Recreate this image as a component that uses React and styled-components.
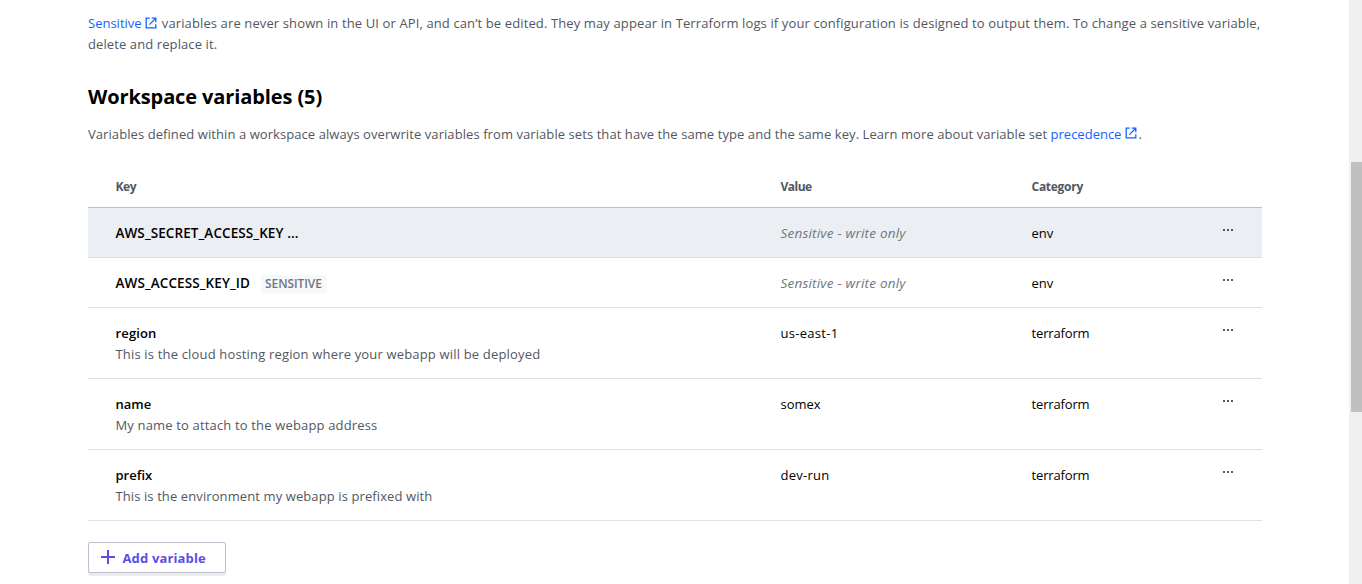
import React from "react";
import styled, { createGlobalStyle } from "styled-components";

const GlobalStyle = createGlobalStyle`
  * { box-sizing: border-box; }
  html, body { margin: 0; height: 584px; overflow: hidden; background: #fff; }
  body { font: 400 13px/21px "Open Sans", "Noto Sans", sans-serif; color: #000; }
`;

const Viewport = styled.div`
  display: flex;
  width: 1362px;
  height: 584px;
  overflow: hidden;
`;

const Main = styled.main`
  width: 1174px;
  margin-left: 88px;
  padding-top: 13px;
  white-space: nowrap;
`;

const ScrollTrack = styled.div`
  width: 13px;
  height: 584px;
  margin-left: auto;
  padding: 162px 0 0 2px;
  background: #f0f0f0;
`;

const ScrollThumb = styled.div`
  height: 250px;
  background: #c0c0c0;
`;

const Paragraph = styled.p`
  margin: 0;
  color: #525761;
  letter-spacing: ${(p) => p.$spacing || 0}px;
`;

const Link = styled.a`
  color: #1563ff;
  letter-spacing: ${(p) => p.$spacing || 0}px;
`;

const Title = styled.h2`
  margin: 28px 0 0;
  font-size: 20px;
  line-height: 28px;
  font-weight: 700;
  letter-spacing: -0.11px;
`;

const Intro = styled(Paragraph)`
  margin-top: 13px;
`;

const ExternalSvg = styled.svg`
  width: 12px;
  height: 12px;
  margin: 0 ${(p) => p.$after}px 0 ${(p) => p.$before}px;
  vertical-align: ${(p) => p.$lift}px;
`;

const Row = styled.div`
  display: grid;
  grid-template-columns: 665px 251px 190px 1fr;
  height: ${(p) => (p.$tall ? 71 : 50)}px;
  padding: 15px 0 0 27.5px;
  border-bottom: 1px solid #dce0e6;
  background: ${(p) => (p.$active ? "#ebeef2" : "transparent")};
`;

const HeaderRow = styled(Row)`
  height: 63px;
  padding-top: 31px;
  border-bottom-color: #bac1cc;
  color: #525761;
  font-size: 12px;
  font-weight: 700;
`;

const Cell = styled.div`
  letter-spacing: ${(p) => p.$spacing || 0}px;
`;

const Key = styled.span`
  font-size: ${(p) => p.$size || 13}px;
  font-weight: 600;
  letter-spacing: ${(p) => p.$spacing || 0}px;
`;

const Description = styled.div`
  color: #525761;
  letter-spacing: ${(p) => p.$spacing || 0}px;
`;

const Hidden = styled.em`
  color: #6f7682;
  font-size: 13.5px;
  letter-spacing: 0.21px;
`;

const Badge = styled.span`
  display: inline-block;
  width: 66px;
  height: 18px;
  margin-left: 10.5px;
  padding-left: 4.5px;
  border-radius: 2px;
  background: #f7f8fa;
  color: #6f7682;
  font-size: 12px;
  line-height: 18px;
  font-weight: 600;
  letter-spacing: -0.1px;
`;

const Dots = styled.div`
  display: flex;
  gap: 2px;
  padding: 6px 0 0 1.5px;
`;

const Dot = styled.i`
  width: 2px;
  height: 2px;
  background: #525761;
`;

const AddButton = styled.button`
  display: flex;
  align-items: center;
  width: 138px;
  height: 31px;
  margin-top: 21px;
  padding: 1px 0 0 12px;
  border: 1px solid #bac1cc;
  border-radius: 2px;
  background: #fff;
  box-shadow: 0 3px 1px rgba(0, 0, 0, 0.08);
  color: #5c4ee5;
  font: 700 13px/21px "Open Sans", "Noto Sans", sans-serif;
  letter-spacing: 0.15px;
`;

const PlusSvg = styled.svg`
  width: 14px;
  height: 14px;
  margin: -2px 7.5px 0 0;
`;

function ExternalIcon({ before, after, lift }) {
  return (
    <ExternalSvg viewBox="0 0 12 12" $before={before} $after={after} $lift={lift} fill="none" stroke="#1563ff" strokeWidth="1.3">
      <path d="M4.7 1.2H1.2v9.6h9.6V7.3M6.7 1.2h4.1v4.1M10.8 1.2 4.4 7.6" />
    </ExternalSvg>
  );
}

const variables = [
  { key: "AWS_SECRET_ACCESS_KEY ...", keySize: 13.5, keySpacing: 0.09, hidden: true, category: "env", active: true },
  { key: "AWS_ACCESS_KEY_ID", keySize: 13.5, keySpacing: 0.1, badge: true, hidden: true, category: "env" },
  { key: "region", keySpacing: 0.15, note: "This is the cloud hosting region where your webapp will be deployed", noteSpacing: 0.17, value: "us-east-1", valueSpacing: 0.3, category: "terraform" },
  { key: "name", note: "My name to attach to the webapp address", noteSpacing: 0.16, value: "somex", category: "terraform" },
  { key: "prefix", note: "This is the environment my webapp is prefixed with", noteSpacing: 0.1, value: "dev-run", valueSpacing: 0.25, category: "terraform" },
];

export default function App() {
  return (
    <Viewport>
      <GlobalStyle />
      <Main>
        <Paragraph $spacing={0.12}>
          <Link>Sensitive<ExternalIcon before={3.2} after={5} lift={-1} /></Link>
          variables are never shown in the UI or API, and can’t be edited. They may appear in Terraform logs if your configuration is designed to output them. To change a sensitive variable,
        </Paragraph>
        <Paragraph $spacing={0.1}>delete and replace it.</Paragraph>
        <Title>Workspace variables (5)</Title>
        <Intro $spacing={0.075}>
          Variables defined within a workspace always overwrite variables from variable sets that have the same type and the same key. Learn more about variable set{" "}
          <Link>precedence<ExternalIcon before={4} after={1} lift={0} /></Link>.
        </Intro>
        <HeaderRow>
          <Cell $spacing={-0.4}>Key</Cell>
          <Cell $spacing={-0.5}>Value</Cell>
          <Cell $spacing={-0.27}>Category</Cell>
        </HeaderRow>
        {variables.map((v) => (
          <Row key={v.key} $tall={!!v.note} $active={v.active}>
            <Cell>
              <Key $spacing={v.keySpacing} $size={v.keySize}>{v.key}</Key>
              {v.badge && <Badge>SENSITIVE</Badge>}
              {v.note && <Description $spacing={v.noteSpacing}>{v.note}</Description>}
            </Cell>
            <Cell $spacing={v.valueSpacing}>{v.hidden ? <Hidden>Sensitive - write only</Hidden> : v.value}</Cell>
            <Cell $spacing={v.category === "terraform" ? -0.15 : 0}>{v.category}</Cell>
            <Dots><Dot /><Dot /><Dot /></Dots>
          </Row>
        ))}
        <AddButton><PlusSvg viewBox="0 0 14 14" stroke="#5c4ee5" strokeWidth="2"><path d="M7 0v14M0 7h14" /></PlusSvg>Add variable</AddButton>
      </Main>
      <ScrollTrack><ScrollThumb /></ScrollTrack>
    </Viewport>
  );
}
